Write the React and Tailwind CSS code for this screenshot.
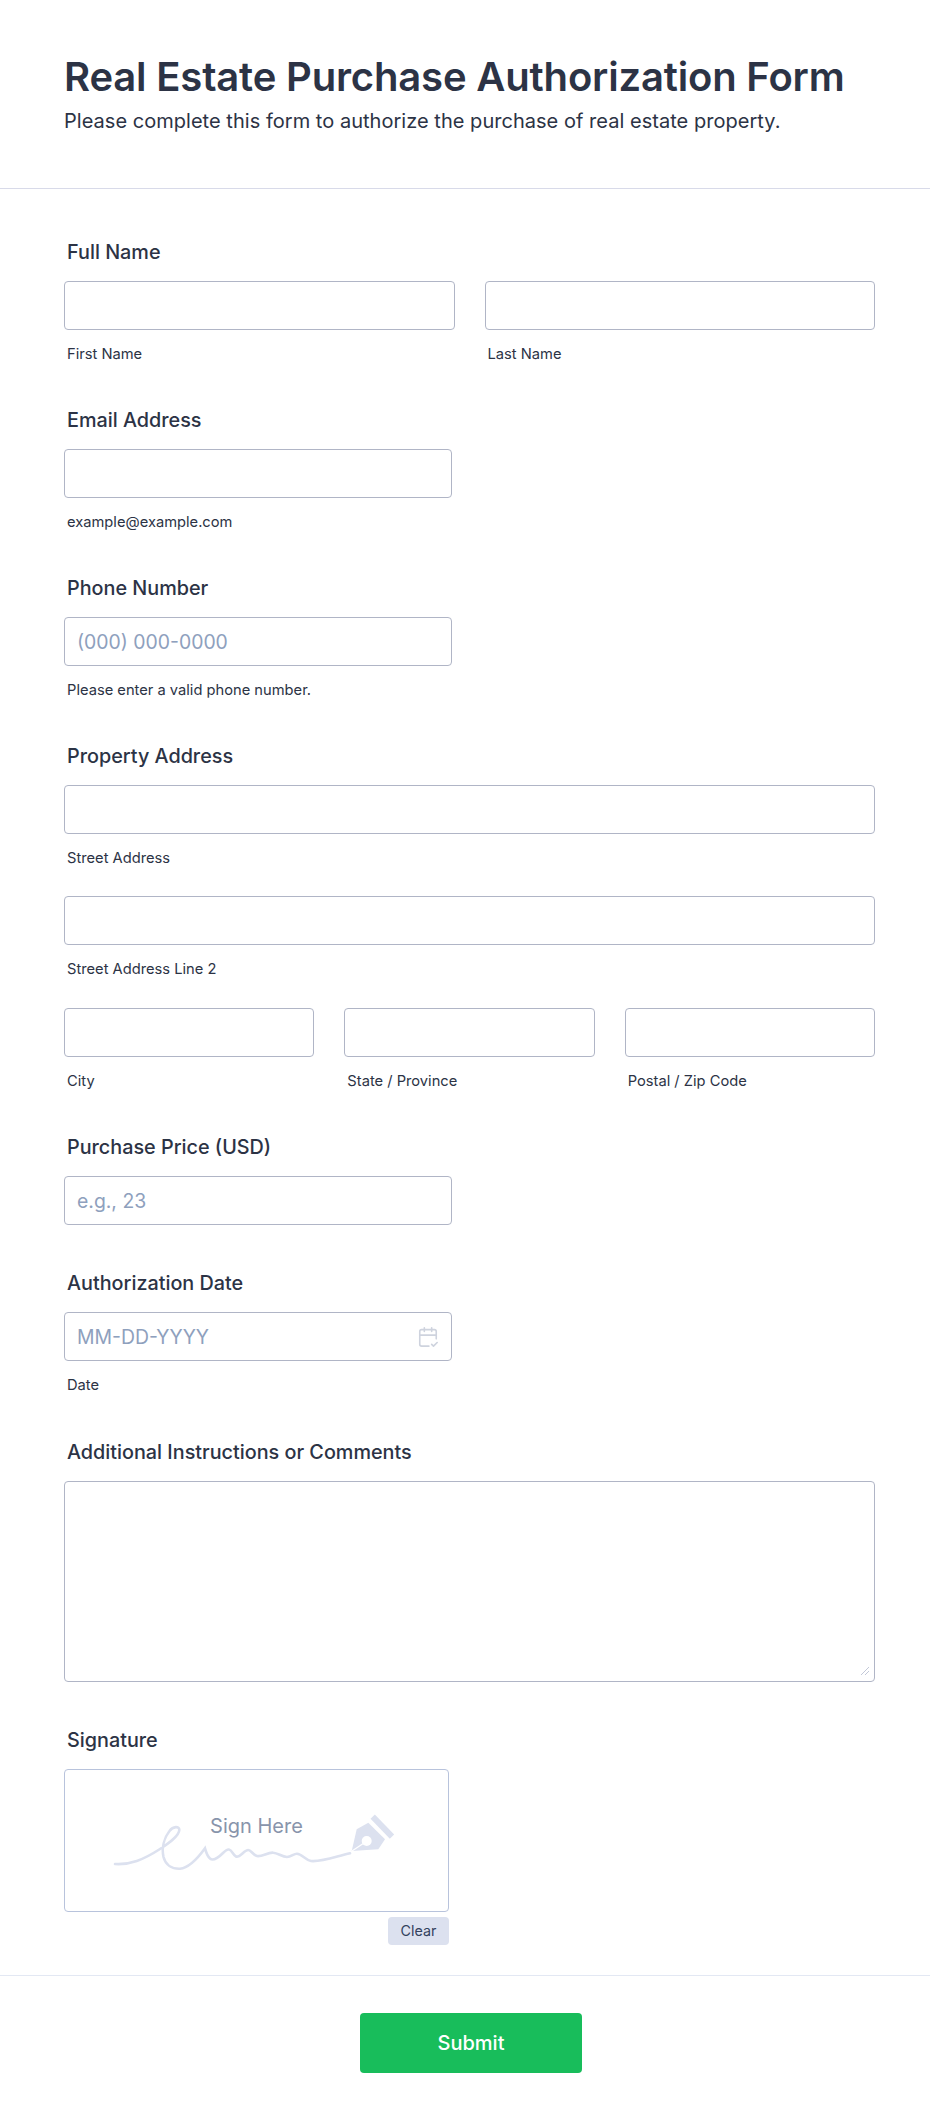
import React from 'react';
import { CalendarCheck2 } from 'lucide-react';

const inputClass = 'block w-full h-[49px] rounded border border-[#b0b5c6] bg-white px-[12px] text-[19.4px] text-[#2c3345] placeholder:text-[#8ea0bd] outline-none';

const Label = ({ children }) => (
  <label className="block pl-[3px] mb-[17px] text-[19.8px] leading-6 font-medium text-[#2c3345]">{children}</label>
);

const SubLabel = ({ children }) => (
  <span className="block pl-[3px] mt-[14px] text-[14.7px] leading-5 text-[#2c3345]">{children}</span>
);

const SignatureArt = () => (
  <svg viewBox="0 0 383 141" className="block w-full h-full" fill="none">
    <path
      d="M50 94C65 95 78 90 95 79C104 73 114 66 114.3 60C114.5 56 108 56 104.5 61C99 68 96.5 78 98.5 87C100.5 95 107 99 115 98.7C124 98 133 88 140 78.3C141 82 142 86 145 88.5C148 91 153 88 158 83C160 81 162 79 164 79.5C167 80 168 85 171 86.5C175 88 179 80 183.3 80C186 80 188 85 192 86C197 87 203 82 208.3 82.7C213 83 217 87 222 87C226 87 229 83.5 232 83.7C237 84 240 90 246 91C258 92 272 86 285 83.3"
      stroke="#dce1ef"
      strokeWidth="2.6"
      strokeLinecap="round"
    />
    <path d="M286.7 81L291.7 59.3L303.3 52.7L320 69.3L313.3 79.3Z" fill="#dce1ef" />
    <path d="M307.7 46.7L327 66.7" stroke="#dce1ef" strokeWidth="6" />
    <circle cx="301.7" cy="71" r="5" fill="#fff" />
    <path d="M287 81L299 73" stroke="#fff" strokeWidth="1.4" />
  </svg>
);

export default function App() {
  return (
    <div className="w-[930px] h-[2122px] bg-white font-['Inter',sans-serif] text-[#2c3345]">
      <header className="h-[189px] border-b border-[#d8dae9] pl-16 pt-[51px]">
        <h1 className="text-[40px] leading-[52px] font-semibold tracking-[-0.17px]">Real Estate Purchase Authorization Form</h1>
        <p className="mt-1 text-[20px] leading-7 tracking-[0.03px] text-[#2c3345]">Please complete this form to authorize the purchase of real estate property.</p>
      </header>

      <form className="pl-16 pr-[55px] pt-[51px] h-[1787px] border-b border-[#e3e8f3]">
        <section>
          <Label>Full Name</Label>
          <div className="grid grid-cols-2 gap-[30px]">
            <div>
              <input className={inputClass} />
              <SubLabel>First Name</SubLabel>
            </div>
            <div>
              <input className={inputClass} />
              <SubLabel>Last Name</SubLabel>
            </div>
          </div>
        </section>

        <section className="mt-[44px] w-[388px]">
          <Label>Email Address</Label>
          <input className={inputClass} />
          <SubLabel>example@example.com</SubLabel>
        </section>

        <section className="mt-[44px] w-[388px]">
          <Label>Phone Number</Label>
          <input className={inputClass} placeholder="(000) 000-0000" />
          <SubLabel>Please enter a valid phone number.</SubLabel>
        </section>

        <section className="mt-[44px]">
          <Label>Property Address</Label>
          <input className={inputClass} />
          <SubLabel>Street Address</SubLabel>
          <input className={`${inputClass} mt-[28px]`} />
          <SubLabel>Street Address Line 2</SubLabel>
          <div className="grid grid-cols-3 gap-[30px] mt-[29px]">
            <div>
              <input className={inputClass} />
              <SubLabel>City</SubLabel>
            </div>
            <div>
              <input className={inputClass} />
              <SubLabel>State / Province</SubLabel>
            </div>
            <div>
              <input className={inputClass} />
              <SubLabel>Postal / Zip Code</SubLabel>
            </div>
          </div>
        </section>

        <section className="mt-[44px] w-[388px]">
          <Label>Purchase Price (USD)</Label>
          <input className={inputClass} placeholder="e.g., 23" />
        </section>

        <section className="mt-[46px] w-[388px]">
          <Label>Authorization Date</Label>
          <div className="relative">
            <input className={inputClass} placeholder="MM-DD-YYYY" />
            <CalendarCheck2 size={22} strokeWidth={1.75} className="absolute right-[13px] top-[14px] text-[#ced3de]" />
          </div>
          <SubLabel>Date</SubLabel>
        </section>

        <section className="mt-[45px]">
          <Label>Additional Instructions or Comments</Label>
          <div className="relative">
            <textarea className="block w-full h-[201px] resize-none rounded border border-[#b0b5c6] bg-white outline-none" />
            {/* resize grip */}
            <svg width="10" height="10" viewBox="0 0 10 10" className="absolute right-[5px] bottom-[6px]" fill="none" stroke="#c3c8d8" strokeWidth="1">
              <path d="M1 9L9 1M5 9L9 5" />
            </svg>
          </div>
        </section>

        <section className="mt-[46px] w-[385px]">
          <Label>Signature</Label>
          <div className="relative h-[143px] rounded border border-[#b8c3dc] bg-white">
            <SignatureArt />
            <span className="absolute left-0 right-0 top-[44px] text-center text-[20px] leading-6 text-[#8894ab]">Sign Here</span>
          </div>
          <div className="flex justify-end mt-[5px]">
            <button type="button" className="w-[61px] h-[28px] rounded bg-[#dce1ef] text-[14.3px] text-[#33425e]">Clear</button>
          </div>
        </section>
      </form>

      <div className="flex justify-center pt-[37px] pl-[12px]">
        <button type="button" className="w-[222px] h-[60px] rounded bg-[#18bd5b] text-[20px] font-medium text-white">Submit</button>
      </div>
    </div>
  );
}
